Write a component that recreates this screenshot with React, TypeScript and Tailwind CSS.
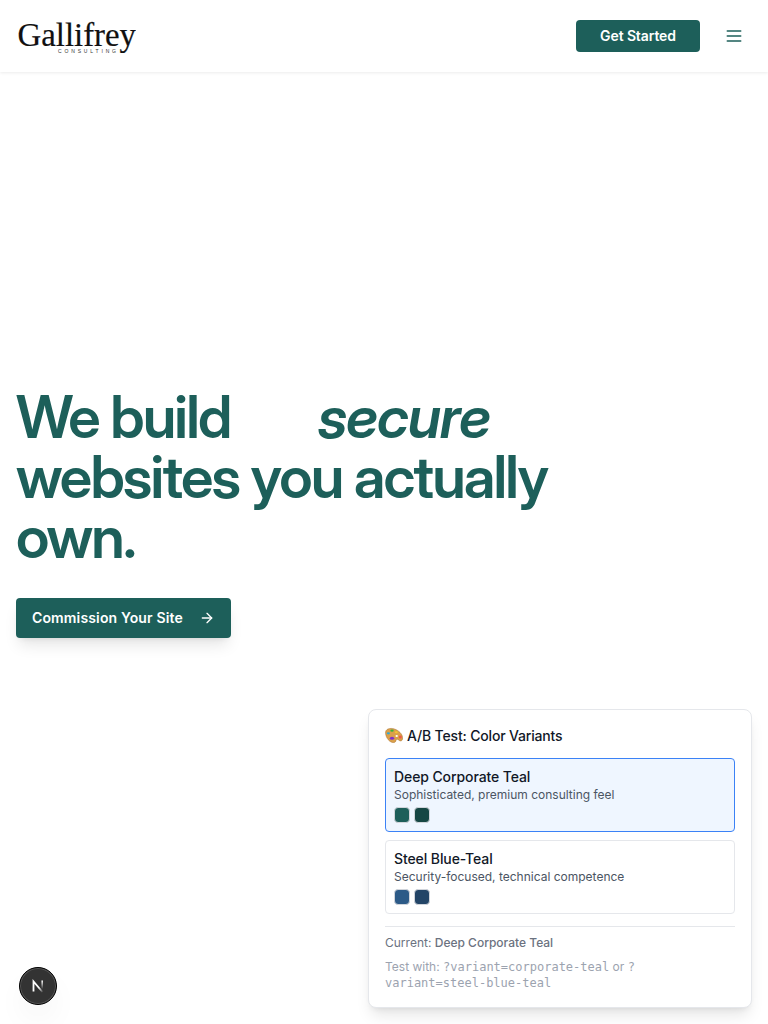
import { ArrowRight } from "lucide-react";

function Logo() {
  return (
    <svg width="120" height="40" viewBox="0 0 120 40" role="img" aria-label="Gallifrey Consulting">
      <text x="1.5" y="29.6" fontSize="33" textLength="118.5" lengthAdjust="spacingAndGlyphs" fill="#101010" stroke="#101010" strokeWidth="0.2" fontFamily="'Liberation Serif', serif">
        Gallifrey
      </text>
      <text x="42" y="36.5" fontSize="5" textLength="58" fill="#333" fontFamily="'Liberation Sans', sans-serif">
        CONSULTING
      </text>
    </svg>
  );
}

function Palette() {
  return (
    <svg width="18" height="18" viewBox="0 0 18 18" className="mr-1" aria-hidden="true">
      <path d="M.7 4.500C1.600 1.200 6.600.500 11.200 2.700c4.200 2.100 7 5.800 6.300 9.300-.5 2.500-2.600 2.200-3.800 1-1.200-1.200-2.600-1-2.700.4-.1 1.600-1.600 2.400-3.500 2.100C3.500 14.800-.2 8.800.7 4.500Z" fill="#dba04a" stroke="#a56a25" strokeWidth=".5" />
      <ellipse cx="3.400" cy="6.300" rx="1.600" ry="1.100" fill="#28a9dc" />
      <ellipse cx="7" cy="3.700" rx="1.700" ry="1.100" fill="#38b53d" />
      <ellipse cx="11.300" cy="5.200" rx="1.500" ry="1" fill="#f4c72e" />
      <ellipse cx="7" cy="11.200" rx="2.200" ry="1.500" fill="#8032c8" />
      <ellipse cx="15.300" cy="10" rx="1.500" ry="1.500" fill="#f05a48" />
      <ellipse cx="11.700" cy="9" rx="1.200" ry=".9" fill="#fff" />
    </svg>
  );
}

interface VariantProps {
  name: string;
  description: string;
  active?: boolean;
  swatches: string[];
}

function Variant({ name, description, active, swatches }: VariantProps) {
  return (
    <button
      className={`block w-full rounded border p-2 text-left ${
        active ? "border-[#3b82f6] bg-[#eff6ff]" : "border-[#e5e7eb] bg-white"
      }`}
    >
      <div className="text-sm font-medium leading-5 tracking-[-0.007em] text-[#111827]">{name}</div>
      <div className="text-xs leading-4 text-[#4b5563]">{description}</div>
      <div className="mt-1 flex gap-1">
        {swatches.map((s) => (
          <span key={s} className={`size-4 rounded border border-[#d1d5db] ${s}`} />
        ))}
      </div>
    </button>
  );
}

export default function App() {
  return (
    <div className="relative flex h-screen flex-col overflow-hidden bg-white font-['Inter',sans-serif] antialiased">
      <header className="flex h-[72px] shrink-0 items-center justify-between px-4 shadow-[0_1px_3px_0_rgba(0,0,0,0.08)]">
        <Logo />
        <div className="flex items-center gap-4">
          <button className="h-8 w-[124px] rounded bg-[#1d5f5a] text-sm font-semibold tracking-[-0.008em] text-white">Get Started</button>
          <button aria-label="Menu" className="flex size-9 items-center justify-center text-[#1d5f5a]">
            <svg width="20" height="20" viewBox="0 0 24 24" fill="none" stroke="currentColor" strokeWidth="2" strokeLinecap="round">
              <path d="M4 6h16M4 12h16M4 18h16" />
            </svg>
          </button>
        </div>
      </header>

      <main className="px-4 pt-[315px]">
        <h1 className="font-['Inter_Display',Inter,sans-serif] text-[58.5px] font-[560] leading-[60px] tracking-[-0.0315em] text-[#1d5f5a]">
          We build <em className="ml-[76px] tracking-[-0.021em]">secure</em>
          <br />
          websites you actually
          <br />
          own.
        </h1>
        <button className="mt-[31px] flex h-10 w-[215px] items-center justify-between rounded bg-[#1d5f5a] px-4 text-sm font-semibold tracking-[0.01em] text-white shadow-[0_10px_15px_-3px_rgba(0,0,0,0.1),0_4px_6px_-4px_rgba(0,0,0,0.1)]">
          Commission Your Site
          <ArrowRight size={16} strokeWidth={2} />
        </button>
      </main>

      <aside className="absolute bottom-4 right-4 h-[299px] w-96 rounded-lg border border-[#e5e7eb] bg-white p-4 shadow-[0_10px_15px_-3px_rgba(0,0,0,0.1),0_4px_6px_-4px_rgba(0,0,0,0.1)]">
        <h3 className="mb-3 flex items-center text-sm font-medium leading-5 tracking-[-0.012em] text-[#111827]">
          <Palette />
          A/B Test: Color Variants
        </h3>
        <div className="flex flex-col gap-2">
          <Variant active name="Deep Corporate Teal" description="Sophisticated, premium consulting feel" swatches={["bg-[#1d5f5a]", "bg-[#164744]"]} />
          <Variant name="Steel Blue-Teal" description="Security-focused, technical competence" swatches={["bg-[#2c5a87]", "bg-[#234567]"]} />
        </div>
        <div className="mt-3 border-t border-[#e5e7eb] pt-2 text-xs leading-4 text-[#6b7280]">
          Current: <span className="font-medium">Deep Corporate Teal</span>
        </div>
        <div className="mt-2 text-xs leading-4 text-[#9ca3af]">
          Test with: <code className="font-['DejaVu_Sans_Mono',monospace]">?variant=corporate-teal</code> or{" "}
          <code className="font-['DejaVu_Sans_Mono',monospace]">
            ?<br />
            variant=steel-blue-teal
          </code>
        </div>
      </aside>

      <button aria-label="Developer tools" className="absolute bottom-[19px] left-[19px] flex size-[38px] items-center justify-center rounded-full border border-black bg-[#333] shadow-[inset_0_0_0_1px_#555,0_16px_32px_-8px_rgba(0,0,0,0.1)]">
        <svg width="14" height="14" viewBox="0 0 14 14" fill="none">
          <defs>
            <linearGradient id="stem" x1="0" y1="0" x2="0" y2="1">
              <stop stopColor="#fff" />
              <stop offset="1" stopColor="#fff" stopOpacity="0" />
            </linearGradient>
            <linearGradient id="diagonal" x1="0" y1="0" x2="1" y2="1">
              <stop offset="0.6" stopColor="#fff" />
              <stop offset="1" stopColor="#fff" stopOpacity="0.1" />
            </linearGradient>
          </defs>
          <path d="M2.500 12.500V2.500L11.500 13" stroke="url(#diagonal)" strokeWidth="1.800" />
          <rect x="10.400" y="1.500" width="1.600" height="8.500" fill="url(#stem)" />
        </svg>
      </button>
    </div>
  );
}
